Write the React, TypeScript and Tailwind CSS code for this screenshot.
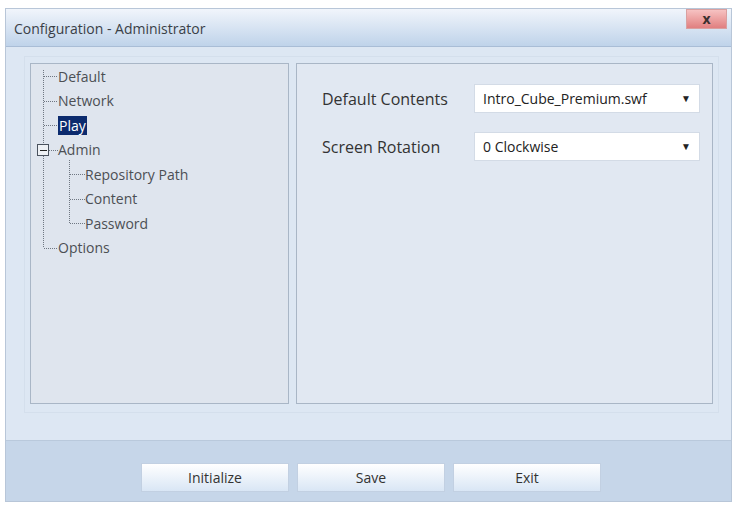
import React from 'react';

const treeItems = [
  { label: 'Default', level: 0 },
  { label: 'Network', level: 0 },
  { label: 'Play', level: 0, selected: true },
  { label: 'Admin', level: 0 },
  { label: 'Repository Path', level: 1 },
  { label: 'Content', level: 1 },
  { label: 'Password', level: 1 },
  { label: 'Options', level: 0 },
];

// row centers inside the tree (24.5px per row)
const rowY = (i: number) => 12.25 + i * 24.5;

const TreeLines = () => (
  <svg className="absolute left-0 top-0" width="120" height="200" shapeRendering="crispEdges">
    <g stroke="#6f7782" strokeWidth="1" strokeDasharray="1 1">
      <line x1="12.5" y1="6" x2="12.5" y2={rowY(7)} />
      {[0, 1, 2, 7].map((i) => (
        <line key={i} x1="13" y1={Math.round(rowY(i)) + 0.5} x2="27" y2={Math.round(rowY(i)) + 0.5} />
      ))}
      <line x1="18" y1={Math.round(rowY(3)) + 0.5} x2="27" y2={Math.round(rowY(3)) + 0.5} />
      <line x1="38.5" y1="96" x2="38.5" y2={rowY(6)} />
      {[4, 5, 6].map((i) => (
        <line key={i} x1="39" y1={Math.round(rowY(i)) + 0.5} x2="54" y2={Math.round(rowY(i)) + 0.5} />
      ))}
    </g>
    {/* collapse box on Admin */}
    <rect x="6.5" y="80.5" width="11" height="11" fill="#eef1f5" stroke="#4a525e" />
    <line x1="9" y1="86.5" x2="16" y2="86.5" stroke="#222" />
  </svg>
);

const Select = ({ value }: { value: string }) => (
  <div className="flex h-[29px] w-[226px] items-center justify-between border border-[#d3dbe6] bg-white pl-2 pr-2 text-[14px] text-[#222]">
    <span>{value}</span>
    <span className="text-[10px] text-[#222]">▼</span>
  </div>
);

const Button = ({ children }: { children: React.ReactNode }) => (
  <button className="h-[29px] w-[148px] border border-[#c2d0e2] bg-gradient-to-b from-white to-[#d9e6f5] text-[14px] text-[#333]">
    {children}
  </button>
);

export default function App() {
  return (
    <div className="h-[507px] w-[737px] bg-white pl-[5px] pt-[8px]" style={{ fontFamily: '"Open Sans", "Noto Sans", sans-serif' }}>
      <div className="flex h-[494px] w-[727px] flex-col border border-[#b8c6d8] bg-[#dde7f3]">
        {/* title bar */}
        <div className="flex h-[38px] items-start justify-between border-b border-[#a9bdd6] bg-gradient-to-b from-[#f1f5fb] to-[#bfd3ea]">
          <span className="mt-[9px] pl-[8px] text-[14px] text-[#3a3f47]">Configuration - Administrator</span>
          <div className="mr-[4px] flex h-[20px] w-[41px] items-center justify-center border border-[#d9a0a0] bg-gradient-to-b from-[#f6c2c2] to-[#e07f80] text-[14px] font-bold leading-none text-[#3a3030]">
            x
          </div>
        </div>

        {/* body */}
        <div className="flex-1 pl-[18px] pr-[12px] pt-[9px]">
          <div className="flex h-[357px] gap-[7px] border border-[#d4dfec] pl-[5px] pt-[6px]">
            <div className="relative h-[341px] w-[259px] border border-[#a9b6c6] bg-[#dfe5ee]">
              <TreeLines />
              <div className="relative flex flex-col">
                {treeItems.map((item) => (
                  <div
                    key={item.label}
                    className={`flex h-[24.5px] items-center ${item.level === 0 ? 'pl-[27px]' : 'pl-[54px]'}`}
                  >
                    <span
                      className={`text-[14px] leading-[19px] ${
                        item.selected ? 'bg-[#0c2b6e] px-[1px] text-white' : 'text-[#4c4f54]'
                      }`}
                    >
                      {item.label}
                    </span>
                  </div>
                ))}
              </div>
            </div>

            <div className="h-[341px] w-[417px] border border-[#a9b6c6] bg-[#e1e8f2] pl-[25px] pt-[20px]">
              <div className="flex flex-col gap-[19px]">
                <div className="flex items-center">
                  <span className="w-[152px] text-[16px] text-[#333]">Default Contents</span>
                  <Select value="Intro_Cube_Premium.swf" />
                </div>
                <div className="flex items-center">
                  <span className="w-[152px] text-[16px] text-[#333]">Screen Rotation</span>
                  <Select value="0 Clockwise" />
                </div>
              </div>
            </div>
          </div>
        </div>

        {/* footer */}
        <div className="flex h-[61px] justify-center gap-[8px] border-t border-[#b9c9dc] bg-[#c6d6e9] pl-[5px] pt-[22px]">
          <Button>Initialize</Button>
          <Button>Save</Button>
          <Button>Exit</Button>
        </div>
      </div>
    </div>
  );
}
